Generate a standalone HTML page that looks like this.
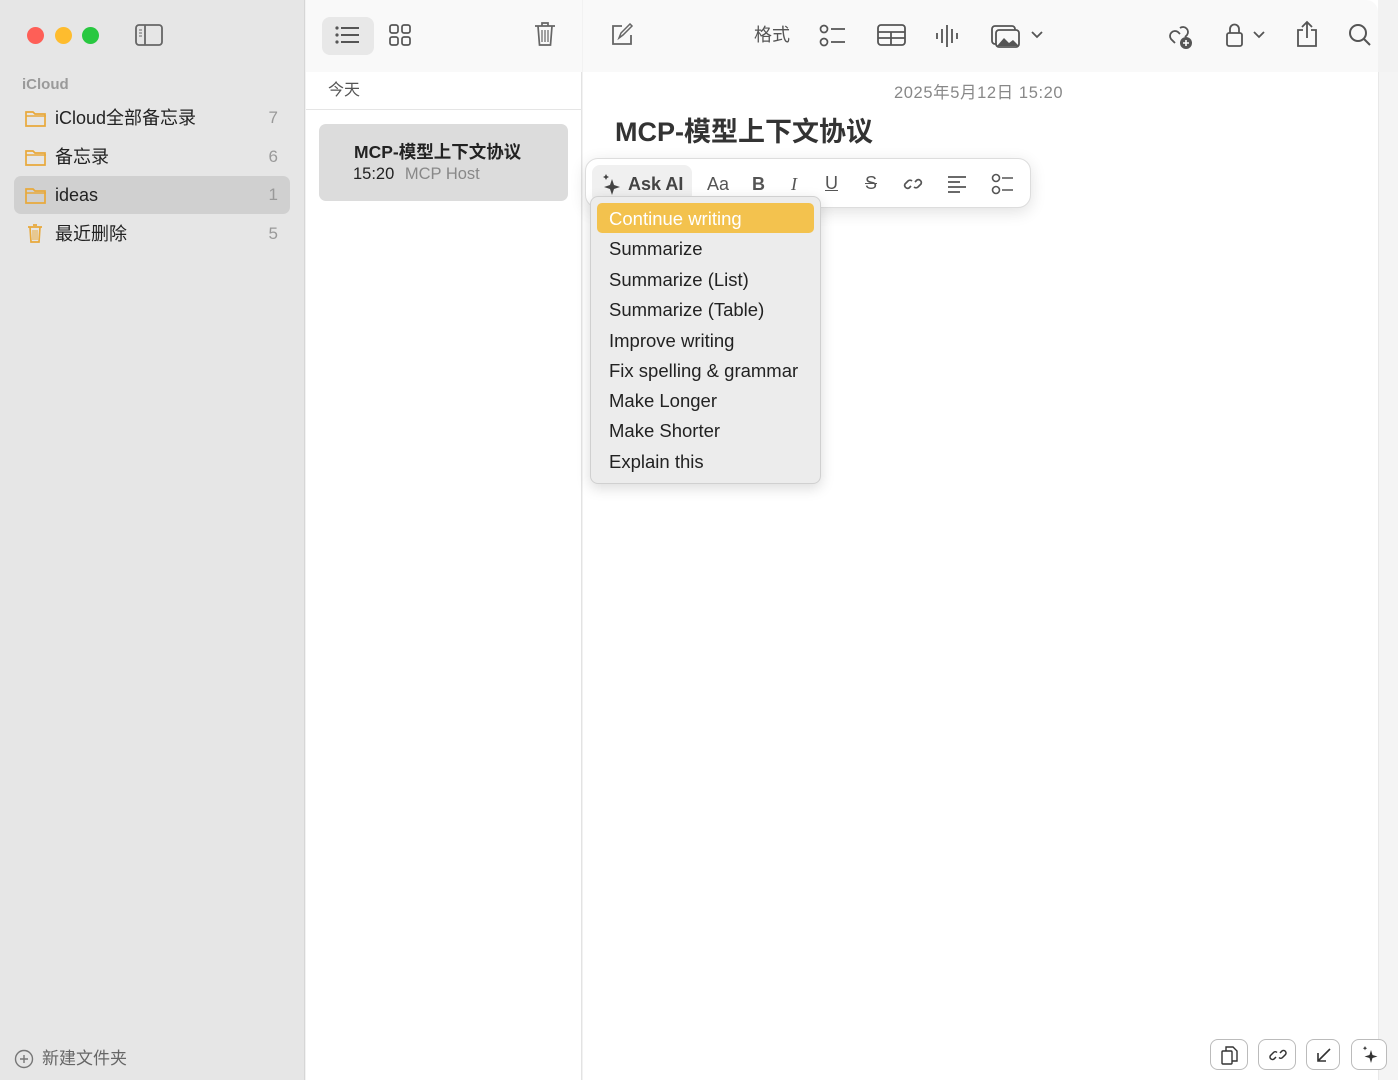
<!DOCTYPE html>
<html><head><meta charset="utf-8"><style>
*{margin:0;padding:0;box-sizing:border-box}
body{width:1398px;height:1080px;overflow:hidden;background:#f2f2f2;font-family:"Liberation Sans","Noto Sans CJK SC",sans-serif;position:relative;color:#222;line-height:1.15}
.side{position:absolute;left:0;top:0;width:305px;height:1080px;background:#e6e6e6;border-right:1px solid #d6d6d6}
.dot{position:absolute;top:27px;width:17px;height:17px;border-radius:50%}
.lbl{position:absolute;left:22px;top:76px;font-size:15px;color:#9a9a9a;font-weight:bold}
.row{position:absolute;left:14px;width:276px;height:38px;border-radius:7px;font-size:18px;color:#222}
.row .t{position:absolute;left:41px;top:8px;line-height:22px}
.row .n{position:absolute;right:12px;top:9px;color:#999;font-size:17px;line-height:20px}
.row svg{position:absolute;left:11px;top:10px}
.list{position:absolute;left:306px;top:0;width:276px;height:1080px;background:#fff;border-right:1px solid #e3e3e3}
.ltb{position:absolute;left:0;top:0;width:276px;height:72px;background:#f9f9f9}
.main{position:absolute;left:583px;top:0;width:795px;height:1080px;background:#fff}
.mtb{position:absolute;left:0;top:0;width:795px;height:72px;background:#f9f9f9;border-top-right-radius:12px}
.ic{position:absolute}
.menu{position:absolute;left:590px;top:196px;width:231px;height:288px;background:#ececec;border:1px solid #d0d0d0;border-radius:8px;box-shadow:0 4px 14px rgba(0,0,0,.15)}
.mi{position:absolute;left:18px;font-size:18.5px;color:#222;line-height:22px}
.fbar{position:absolute;left:585px;top:158px;width:446px;height:50px;background:#fff;border:1px solid #ddd;border-radius:13px;box-shadow:0 4px 16px rgba(0,0,0,.12)}
.bb{position:absolute;top:1039px;width:38px;height:31px;border:1px solid #bbb;border-radius:8px;background:#fff}
</style></head><body>
<div class="side">
 <div class="dot" style="left:27px;background:#fe5f57"></div>
 <div class="dot" style="left:55px;background:#febc2e"></div>
 <div class="dot" style="left:82px;background:#28c840"></div>
 <svg class="ic" style="left:135px;top:24px" width="29" height="23"><rect x="1" y="1" width="26" height="20" rx="3" fill="none" stroke="#666" stroke-width="1.8"/><line x1="10" y1="1" x2="10" y2="21" stroke="#666" stroke-width="1.8"/><line x1="4" y1="6" x2="7" y2="6" stroke="#666"/><line x1="4" y1="9" x2="7" y2="9" stroke="#666"/><line x1="4" y1="12" x2="7" y2="12" stroke="#666"/></svg>
 <div class="lbl">iCloud</div>
 <div class="row" style="top:99px"><svg width="22" height="18"><path d="M1 3h7l2 2h10v12H1z" fill="none" stroke="#e8a93b" stroke-width="1.7"/><line x1="1" y1="7" x2="21" y2="7" stroke="#e8a93b" stroke-width="1.5"/></svg><span class="t">iCloud全部备忘录</span><span class="n">7</span></div>
 <div class="row" style="top:138px"><svg width="22" height="18"><path d="M1 3h7l2 2h10v12H1z" fill="none" stroke="#e8a93b" stroke-width="1.7"/><line x1="1" y1="7" x2="21" y2="7" stroke="#e8a93b" stroke-width="1.5"/></svg><span class="t">备忘录</span><span class="n">6</span></div>
 <div class="row" style="top:176px;background:#d0d0d0"><svg width="22" height="18"><path d="M1 3h7l2 2h10v12H1z" fill="none" stroke="#e8a93b" stroke-width="1.7"/><line x1="1" y1="7" x2="21" y2="7" stroke="#e8a93b" stroke-width="1.5"/></svg><span class="t">ideas</span><span class="n">1</span></div>
 <div class="row" style="top:215px"><svg width="22" height="20" style="left:12px;top:9px"><path d="M2 3h14M4 3l1 15h8l1-15M7 1h4" fill="none" stroke="#e8a93b" stroke-width="1.7"/><path d="M7 6v10M9 6v10M11 6v10" stroke="#e8a93b"/></svg><span class="t">最近删除</span><span class="n">5</span></div>
 <svg class="ic" style="left:14px;top:1049px" width="20" height="20"><circle cx="10" cy="10" r="8.5" fill="none" stroke="#777" stroke-width="1.4"/><path d="M10 6v8M6 10h8" stroke="#777" stroke-width="1.4"/></svg>
 <div style="position:absolute;left:42px;top:1048px;font-size:17px;color:#666;line-height:22px">新建文件夹</div>
</div>
<div class="list">
 <div class="ltb">
  <div style="position:absolute;left:16px;top:17px;width:52px;height:38px;background:#e8e8e8;border-radius:8px"></div>
  <svg class="ic" style="left:29px;top:25px" width="26" height="20"><g fill="#555"><circle cx="2" cy="3" r="1.6"/><circle cx="2" cy="10" r="1.6"/><circle cx="2" cy="17" r="1.6"/><rect x="6" y="2" width="18" height="2"/><rect x="6" y="9" width="18" height="2"/><rect x="6" y="16" width="18" height="2"/></g></svg>
  <svg class="ic" style="left:83px;top:24px" width="22" height="22"><g fill="none" stroke="#555" stroke-width="1.7"><rect x="1" y="1" width="8" height="8" rx="2"/><rect x="13" y="1" width="8" height="8" rx="2"/><rect x="1" y="13" width="8" height="8" rx="2"/><rect x="13" y="13" width="8" height="8" rx="2"/></g></svg>
  <svg class="ic" style="left:228px;top:21px" width="22" height="26"><g fill="none" stroke="#666" stroke-width="1.7"><path d="M1 5h20M4 5l1.5 19h11L18 5M8 5V2h6v3"/><path d="M8 9v12M11 9v12M14 9v12" stroke-width="1.2"/></g></svg>
 </div>
 <div style="position:absolute;left:22px;top:81px;font-size:16px;color:#555;line-height:20px">今天</div>
 <div style="position:absolute;left:0;top:109px;width:276px;height:1px;background:#e5e5e5"></div>
 <div style="position:absolute;left:13px;top:124px;width:249px;height:77px;background:#dcdcdc;border-radius:7px">
  <div style="position:absolute;left:35px;top:17px;font-size:17.5px;font-weight:bold;color:#222;line-height:22px">MCP-模型上下文协议</div>
  <div style="position:absolute;left:34px;top:40px;font-size:16.5px;color:#222;line-height:20px">15:20 <span style="color:#888;margin-left:6px">MCP Host</span></div>
 </div>
</div>
<div class="main">
 <div class="mtb">
  <svg class="ic" style="left:27px;top:23px" width="24" height="24"><path d="M12 3H3v18h18v-9" fill="none" stroke="#666" stroke-width="1.8"/><path d="M9 15l2-5 9-9 2 2-9 9z" fill="none" stroke="#666" stroke-width="1.5"/></svg>
  <div style="position:absolute;left:171px;top:24px;font-size:18px;color:#555;line-height:22px">格式</div>
  <svg class="ic" style="left:236px;top:24px" width="28" height="24"><g fill="none" stroke="#555" stroke-width="1.7"><circle cx="5" cy="5" r="3.5"/><circle cx="5" cy="18" r="3.5"/><path d="M12 5h14M12 18h14"/></g></svg>
  <svg class="ic" style="left:294px;top:24px" width="30" height="23"><g fill="none" stroke="#555" stroke-width="1.8"><rect x="1" y="1" width="27" height="20" rx="3"/><path d="M1 8h27M1 14h27M14 8v13"/></g></svg>
  <svg class="ic" style="left:352px;top:23px" width="24" height="26"><g stroke="#555" stroke-width="1.8"><path d="M2 10v6M7 6v14M12 2v22M17 6v14M22 10v6"/></g></svg>
  <svg class="ic" style="left:408px;top:23px" width="30" height="26"><g fill="none" stroke="#555" stroke-width="1.8"><rect x="1" y="3" width="23" height="18" rx="3"/><rect x="5" y="7" width="23" height="17" rx="3" fill="#f9f9f9"/></g><path d="M6 23l7-8 5 5 4-3 6 6z" fill="#555"/></svg>
  <svg class="ic" style="left:448px;top:31px" width="12" height="8"><path d="M1 1l5 5 5-5" fill="none" stroke="#555" stroke-width="1.8"/></svg>
  <svg class="ic" style="left:582px;top:21px" width="30" height="30"><g fill="none" stroke="#555" stroke-width="1.8"><path d="M10 22l-4-4a5 5 0 0 1 7-7l2 2M15 7a5 5 0 0 1 7 7l-2 2"/></g><circle cx="21" cy="22" r="6" fill="#555"/><path d="M21 19v6M18 22h6" stroke="#fff" stroke-width="1.6"/></svg>
  <svg class="ic" style="left:642px;top:22px" width="20" height="26"><g fill="none" stroke="#555" stroke-width="1.8"><rect x="2" y="11" width="15" height="13" rx="2"/><path d="M5 11V7a4.5 4.5 0 0 1 9 0v4"/></g></svg>
  <svg class="ic" style="left:670px;top:31px" width="12" height="8"><path d="M1 1l5 5 5-5" fill="none" stroke="#555" stroke-width="1.8"/></svg>
  <svg class="ic" style="left:713px;top:20px" width="22" height="28"><g fill="none" stroke="#555" stroke-width="1.8"><path d="M7 10H2v16h18V10h-5M11 18V2M6 7l5-5 5 5"/></g></svg>
  <svg class="ic" style="left:765px;top:23px" width="24" height="24"><g fill="none" stroke="#555" stroke-width="2"><circle cx="10" cy="10" r="8"/><path d="M16 16l6 6"/></g></svg>
 </div>
 <div style="position:absolute;left:311px;top:83px;font-size:16.5px;color:#888;letter-spacing:0.6px;line-height:20px">2025年5月12日 15:20</div>
 <div style="position:absolute;left:32px;top:116px;font-size:27px;font-weight:bold;color:#333;line-height:32px">MCP-模型上下文协议</div>
</div>
<div style="position:absolute;left:1378px;top:72px;width:20px;height:1008px;background:#f4f4f4;border-left:1px solid #e8e8e8"></div>
<div class="fbar">
 <div style="position:absolute;left:6px;top:6px;width:100px;height:38px;background:#f0f0f0;border-radius:8px"></div>
 <svg class="ic" style="left:16px;top:14px" width="20" height="24"><path d="M10 6l2 6 6 2-6 2-2 6-2-6-6-2 6-2z" fill="#444"/><path d="M4 1l1 2 2 1-2 1-1 2-1-2-2-1 2-1z" fill="#444"/></svg>
 <div style="position:absolute;left:42px;top:15px;font-size:18px;font-weight:bold;color:#444">Ask AI</div>
 <div style="position:absolute;left:121px;top:15px;font-size:18px;color:#555">Aa</div>
 <div style="position:absolute;left:166px;top:15px;font-size:18px;font-weight:bold;color:#555">B</div>
 <div style="position:absolute;left:205px;top:15px;font-size:18px;font-style:italic;color:#555;font-family:'Liberation Serif',serif">I</div>
 <div style="position:absolute;left:239px;top:14px;font-size:18px;text-decoration:underline;color:#555">U</div>
 <div style="position:absolute;left:279px;top:14px;font-size:18px;text-decoration:line-through;color:#555">S</div>
 <svg class="ic" style="left:317px;top:15px" width="20" height="20"><g fill="none" stroke="#555" stroke-width="1.7"><path d="M8 12l-2 2a3 3 0 0 1-4-4l3-3a3 3 0 0 1 4 0M12 8l2-2a3 3 0 0 1 4 4l-3 3a3 3 0 0 1-4 0"/></g></svg>
 <svg class="ic" style="left:361px;top:16px" width="20" height="18"><g stroke="#555" stroke-width="1.7"><path d="M1 2h18M1 7h12M1 12h18M1 17h12"/></g></svg>
 <svg class="ic" style="left:405px;top:14px" width="24" height="22"><g fill="none" stroke="#555" stroke-width="1.6"><circle cx="5" cy="5" r="3.5"/><circle cx="5" cy="17" r="3.5"/><path d="M11 5h11M11 17h11"/></g></svg>
</div>
<div class="menu">
 <div style="position:absolute;left:6px;top:6px;width:217px;height:30px;background:#f3c24e;border-radius:5px"></div>
 <div class="mi" style="top:11px;color:#fff">Continue writing</div>
 <div class="mi" style="top:41px">Summarize</div>
 <div class="mi" style="top:72px">Summarize (List)</div>
 <div class="mi" style="top:102px">Summarize (Table)</div>
 <div class="mi" style="top:133px">Improve writing</div>
 <div class="mi" style="top:163px">Fix spelling &amp; grammar</div>
 <div class="mi" style="top:193px">Make Longer</div>
 <div class="mi" style="top:223px">Make Shorter</div>
 <div class="mi" style="top:254px">Explain this</div>
</div>
<div class="bb" style="left:1210px"><svg style="position:absolute;left:10px;top:6px" width="18" height="19"><g fill="none" stroke="#333" stroke-width="1.4"><rect x="1" y="5" width="10" height="13" rx="1"/><path d="M5 5V1h7l4 4v10h-5"/></g></svg></div>
<div class="bb" style="left:1258px"><svg style="position:absolute;left:10px;top:6px" width="18" height="18"><g fill="none" stroke="#333" stroke-width="1.5"><path d="M7 11l-2 2a2.5 2.5 0 0 1-3.5-3.5l3-3a2.5 2.5 0 0 1 3.5 0M11 7l2-2a2.5 2.5 0 0 1 3.5 3.5l-3 3a2.5 2.5 0 0 1-3.5 0"/></g></svg></div>
<div class="bb" style="left:1306px;width:34px"><svg style="position:absolute;left:9px;top:7px" width="16" height="16"><path d="M14 2L2 14M2 6v8h8" fill="none" stroke="#333" stroke-width="1.6"/></svg></div>
<div class="bb" style="left:1351px;width:36px"><svg style="position:absolute;left:9px;top:5px" width="18" height="20"><path d="M10 5l1.5 5 5 1.5-5 1.5-1.5 5-1.5-5-5-1.5 5-1.5z" fill="#333"/><path d="M4 1l.7 1.5 1.5.7-1.5.7L4 5.4l-.7-1.5-1.5-.7 1.5-.7z" fill="#333"/></svg></div>
</body></html>
